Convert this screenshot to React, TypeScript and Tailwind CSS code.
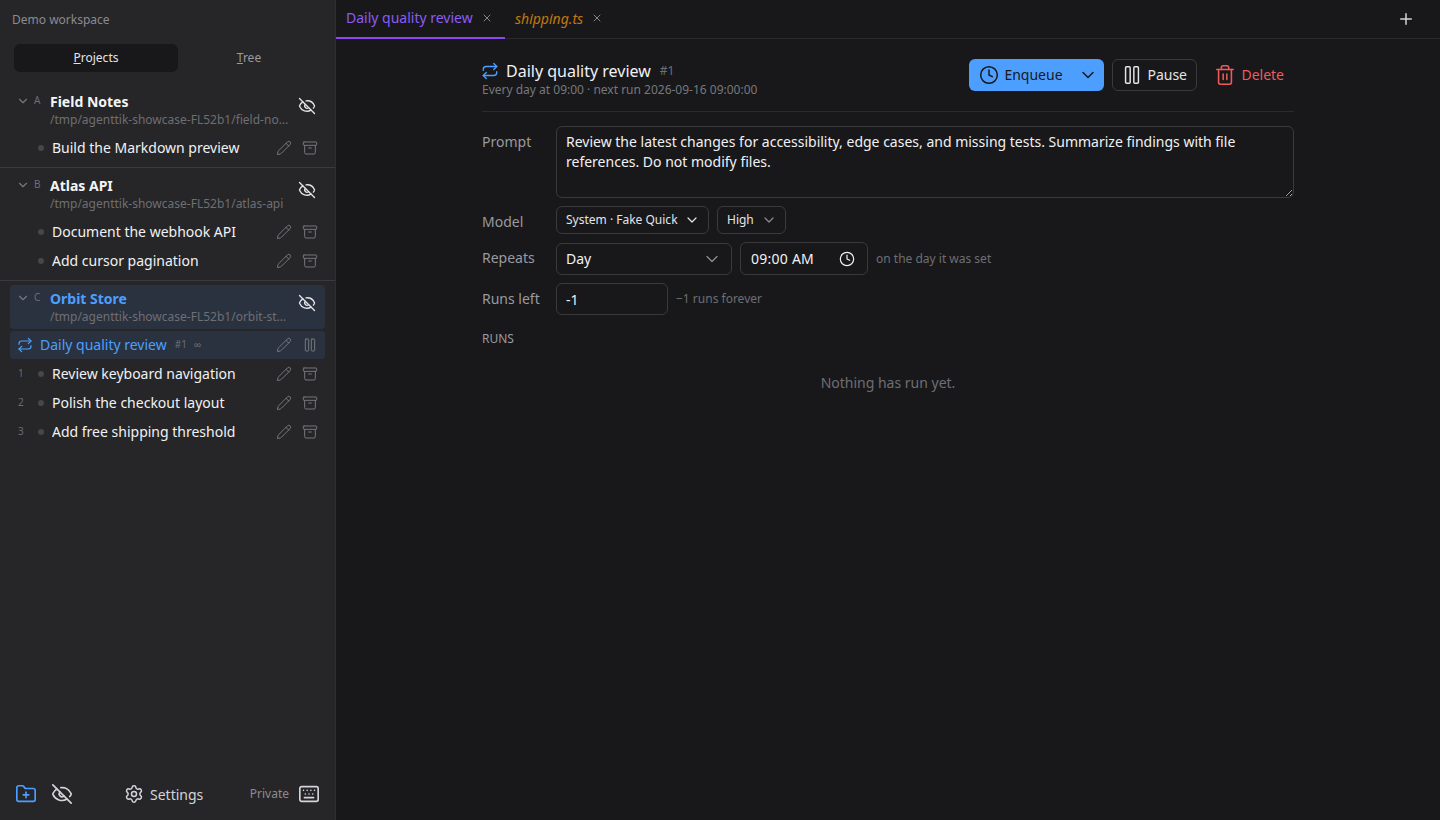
import React from "react";
import { Archive, ChevronDown, Clock, EyeOff, FolderPlus, Keyboard, Pause, Pencil, Plus, Repeat, Settings, Trash2, X } from "lucide-react";

const font = { fontFamily: '"Noto Sans", sans-serif' };

function TaskRow({ title, num }: { title: string; num?: string }) {
  return (
    <div className="flex h-[29px] items-center pl-[18px] pr-[17px]">
      <span className="-mt-[2px] w-[20px] shrink-0 text-[10px] leading-none text-[#6b6b70]">{num}</span>
      <span className="h-[6px] w-[6px] shrink-0 rounded-full bg-[#47474b]" />
      <span className="ml-[8px] flex-1 truncate text-[14px] text-[#f1f1f3]">{title}</span>
      <Pencil size={16} className="mr-[10px] text-[#77777c]" strokeWidth={1.5} />
      <Archive size={16} className="text-[#77777c]" strokeWidth={1.5} />
    </div>
  );
}

function ProjectHead({ letter, name, path, active }: { letter: string; name: string; path: string; active?: boolean }) {
  return (
    <div className={`mx-[10px] flex h-[44px] items-start rounded-[4px] pl-[6px] pr-[8px] ${active ? "bg-[#2a3240] pt-[5px]" : "pt-[3px]"}`}>
      <ChevronDown size={14} className="mt-[1px] shrink-0 text-[#77777c]" strokeWidth={2} />
      <span className="ml-[4px] mt-[1px] w-[12px] shrink-0 text-[10px] leading-[12px] text-[#6e6e73]">{letter}</span>
      <div className="ml-[4px] w-[240px] min-w-0">
        <div className={`text-[14px] font-bold leading-[18px] ${active ? "text-[#4d9fff]" : "text-[#f5f5f7]"}`}>{name}</div>
        <div className="truncate text-[12px] leading-[17px] text-[#6e6e73]">{path}</div>
      </div>
      <EyeOff size={18} className="ml-[8px] mt-[4px] shrink-0 text-[#e4e4e7]" strokeWidth={1.8} />
    </div>
  );
}

function Sidebar() {
  return (
    <aside className="flex h-full w-[336px] shrink-0 flex-col border-r border-[#2f2f32] bg-[#262628]">
      <div className="flex h-[39px] items-center pl-[12px] text-[12px] text-[#8b8b90]">Demo workspace</div>
      <div className="mt-[5px] flex h-[28px] pl-[14px] pr-[15px] text-[12px]">
        <div className="flex w-[164px] items-center justify-center rounded-[6px] bg-[#18181a] text-[#e4e4e7]"><span><u>P</u>rojects</span></div>
        <div className="flex flex-1 items-center justify-center text-[#9a9a9f]"><span><u>T</u>ree</span></div>
      </div>
      <div className="mt-[18px]">
        <ProjectHead letter="A" name="Field Notes" path="/tmp/agenttik-showcase-FL52b1/field-notes" />
        <div className="-mt-[1px] pb-[5px]">
          <TaskRow title="Build the Markdown preview" />
        </div>
      </div>
      <div className="border-t border-[#3a3a3d] pt-[6px]">
        <ProjectHead letter="B" name="Atlas API" path="/tmp/agenttik-showcase-FL52b1/atlas-api" />
        <div className="-mt-[1px] pb-[5px]">
          <TaskRow title="Document the webhook API" />
          <TaskRow title="Add cursor pagination" />
        </div>
      </div>
      <div className="border-t border-[#3a3a3d] pt-[4px]">
        <ProjectHead active letter="C" name="Orbit Store" path="/tmp/agenttik-showcase-FL52b1/orbit-store" />
        <div className="mx-[10px] mt-[2px] flex h-[28px] items-center rounded-[4px] bg-[#2a3240] pl-[7px] pr-[7px]">
          <Repeat size={16} className="shrink-0 text-[#4d9fff]" strokeWidth={1.8} />
          <span className="-mt-[1px] ml-[7px] text-[14px] text-[#4d9fff]">Daily quality review</span>
          <span className="-mt-[2px] ml-[8px] text-[10px] text-[#6e6e73]">#1</span>
          <span className="-mt-[2px] ml-[7px] text-[10px] text-[#6e6e73]">∞</span>
          <span className="flex-1" />
          <Pencil size={16} className="mr-[10px] text-[#77777c]" strokeWidth={1.5} />
          <Pause size={16} className="text-[#77777c]" strokeWidth={1.5} />
        </div>
        <div>
          <TaskRow num="1" title="Review keyboard navigation" />
          <TaskRow num="2" title="Polish the checkout layout" />
          <TaskRow num="3" title="Add free shipping threshold" />
        </div>
      </div>
      <div className="flex-1" />
      <div className="flex h-[52px] items-center pl-[15px] pr-[15px]">
        <FolderPlus size={22} className="text-[#4d9fff]" strokeWidth={1.8} />
        <EyeOff size={22} className="ml-[14px] text-[#d4d4d8]" strokeWidth={1.8} />
        <div className="ml-[51px] flex items-center gap-[6px] text-[14px] text-[#d4d4d8]">
          <Settings size={20} strokeWidth={1.8} />
          <span>Settings</span>
        </div>
        <span className="flex-1" />
        <span className="text-[12px] text-[#8b8b90]">Private</span>
        <Keyboard size={22} className="ml-[9px] text-[#d4d4d8]" strokeWidth={1.8} />
      </div>
    </aside>
  );
}

function Tabs() {
  return (
    <div className="flex h-[39px] shrink-0 border-b border-[#2a2a2d]">
      <div className="-mb-px flex h-[39px] w-[169px] items-center border-b-2 border-[#8b45f5] pb-[2px] pl-[10px] text-[14px] text-[#8b5cf6]">
        <span>Daily quality review</span>
        <X size={12} className="ml-[8px] text-[#85858a]" />
      </div>
      <div className="flex items-center pb-[2px] pl-[10px] text-[14px] italic text-[#c2780c]">
        <span>shipping.ts</span>
        <X size={12} className="ml-[8px] text-[#85858a]" />
      </div>
      <span className="flex-1" />
      <div className="flex w-[68px] items-center justify-center">
        <Plus size={18} className="text-[#d4d4d8]" strokeWidth={2} />
      </div>
    </div>
  );
}

function Label({ children, className = "" }: { children: React.ReactNode; className?: string }) {
  return <div className={`w-[74px] shrink-0 text-[14px] text-[#9a9a9f] ${className}`}>{children}</div>;
}

function Detail() {
  return (
    <div className="mx-auto w-[812px] pt-[17px]">
      <div className="flex h-[56px] items-start border-b border-[#2a2a2d]">
        <div className="flex-1 pt-[4px]">
          <div className="flex h-[22px] items-center">
            <Repeat size={18} className="-ml-[1px] text-[#4d9fff]" strokeWidth={1.8} />
            <span className="ml-[7px] text-[16px] text-[#f1f1f3]">Daily quality review</span>
            <span className="ml-[9px] text-[12px] text-[#6e6e73]">#1</span>
          </div>
          <div className="text-[12px] leading-[16px] text-[#77777c]">Every day at 09:00 · next run 2026-09-16 09:00:00</div>
        </div>
        <div className="flex items-center pt-[3px]">
          <div className="flex h-[32px] w-[135px] items-center rounded-[6px] bg-[#4d9fff] pb-[1px] pl-[10px] text-[14px] text-[#18181b]">
            <Clock size={20} strokeWidth={1.8} />
            <span className="ml-[5px] flex-1">Enqueue</span>
            <ChevronDown size={20} className="mr-[6px]" strokeWidth={1.8} />
          </div>
          <div className="ml-[8px] flex h-[32px] w-[85px] items-center rounded-[6px] border border-[#3a3a3d] pb-[1px] pl-[8px] text-[14px] text-[#e4e4e7]">
            <Pause size={22} strokeWidth={1.6} />
            <span className="ml-[4px]">Pause</span>
          </div>
          <div className="ml-[17px] mr-[10px] flex items-center pb-[1px] text-[14px] text-[#ef5a5a]">
            <Trash2 size={22} strokeWidth={1.7} />
            <span className="ml-[5px]">Delete</span>
          </div>
        </div>
      </div>
      <div className="mt-[14px] flex">
        <Label className="pt-[5px]">Prompt</Label>
        <textarea
          readOnly
          className="h-[72px] flex-1 rounded-[6px] border border-[#3a3a3d] bg-transparent px-[9px] py-[5px] text-[14px] leading-[20px] text-[#f1f1f3] outline-none"
          defaultValue="Review the latest changes for accessibility, edge cases, and missing tests. Summarize findings with file references. Do not modify files."
        />
      </div>
      <div className="mt-[8px] flex items-center">
        <Label className="pt-[3px]">Model</Label>
        <div className="flex h-[28px] w-[153px] items-center rounded-[6px] border border-[#3a3a3d] pl-[9px] text-[12px] text-[#e4e4e7]">
          <span className="flex-1">System · Fake Quick</span>
          <ChevronDown size={16} className="mr-[8px]" strokeWidth={1.8} />
        </div>
        <div className="ml-[8px] flex h-[28px] w-[69px] items-center rounded-[6px] border border-[#3a3a3d] pl-[9px] text-[12px] text-[#e4e4e7]">
          <span className="flex-1">High</span>
          <ChevronDown size={16} className="mr-[8px] text-[#8b8b90]" strokeWidth={1.8} />
        </div>
      </div>
      <div className="mt-[8px] flex items-center">
        <Label className="-mt-[2px]">Repeats</Label>
        <div className="flex h-[32px] w-[176px] items-center rounded-[6px] border border-[#3a3a3d] pl-[9px] text-[14px] text-[#f1f1f3]">
          <span className="flex-1">Day</span>
          <ChevronDown size={20} className="mr-[9px] text-[#8b8b90]" strokeWidth={1.6} />
        </div>
        <div className="ml-[8px] flex h-[33px] w-[128px] items-center rounded-[6px] border border-[#3a3a3d] pl-[10px] text-[14px] text-[#f1f1f3]">
          <span className="flex-1 tracking-[0.25px]">09:00 AM</span>
          <Clock size={16} className="mr-[12px]" strokeWidth={1.8} />
        </div>
        <span className="ml-[8px] text-[12px] text-[#6e6e73]">on the day it was set</span>
      </div>
      <div className="mt-[8px] flex items-center">
        <Label className="-mt-[2px]">Runs left</Label>
        <div className="flex h-[32px] w-[112px] items-center rounded-[6px] border border-[#3a3a3d] pl-[9px] text-[14px] text-[#f1f1f3]">-1</div>
        <span className="ml-[8px] text-[12px] text-[#6e6e73]">−1 runs forever</span>
      </div>
      <div className="mt-[16px] text-[12px] leading-[16px] text-[#9a9a9f]">RUNS</div>
      <div className="mt-[25px] text-center text-[14px] text-[#6e6e73]">Nothing has run yet.</div>
    </div>
  );
}

export default function App() {
  return (
    <div className="flex h-[820px] w-[1440px] overflow-hidden bg-[#18181b]" style={font}>
      <Sidebar />
      <main className="flex min-w-0 flex-1 flex-col">
        <Tabs />
        <Detail />
      </main>
    </div>
  );
}
